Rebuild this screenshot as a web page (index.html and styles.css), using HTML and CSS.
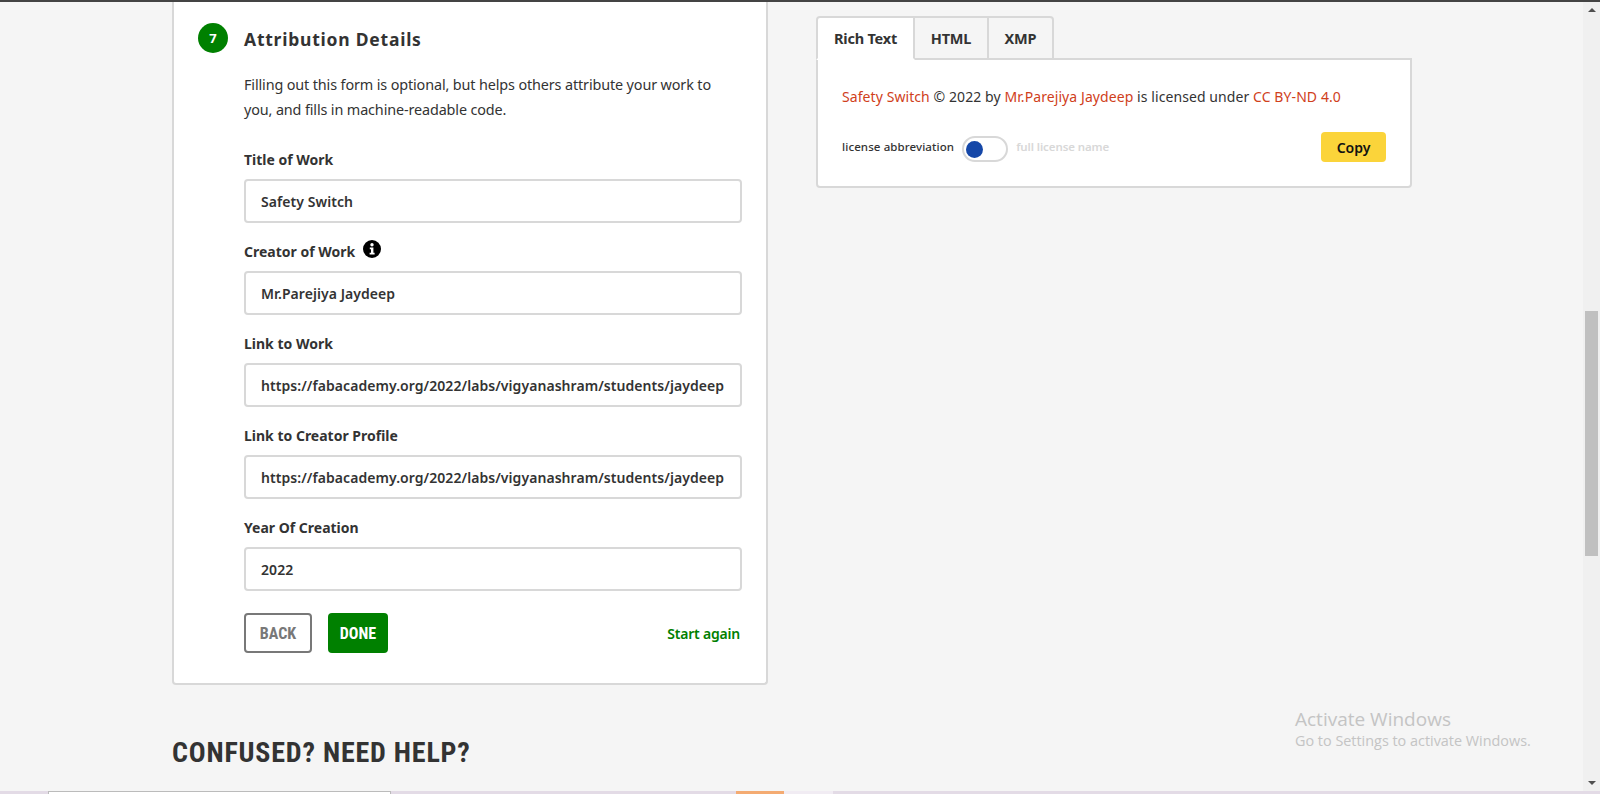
FILE: index.html
```html
<!DOCTYPE html>
<html lang="en">
<head>
<meta charset="utf-8">
<title>Attribution Details</title>
<link rel="stylesheet" href="styles.css">
</head>
<body>
<div class="page">
  <div class="topbar"></div>
  <div class="middle">
    <main class="content">
      <div class="columns">
        <section class="card">
          <div class="step-head">
            <span class="step-num">7</span>
            <h2 class="step-title">Attribution Details</h2>
          </div>
          <div class="step-body">
            <p class="intro">Filling out this form is optional, but helps others attribute your work to you, and fills in machine-readable code.</p>
            <div class="field">
              <label class="label">Title of Work</label>
              <div class="input">Safety Switch</div>
            </div>
            <div class="field">
              <label class="label">Creator of Work
                <svg class="info" viewBox="0 0 18 18" width="18" height="18"><circle cx="9" cy="9" r="9" fill="#000"/><circle cx="9" cy="4.8" r="1.7" fill="#fff"/><path d="M6.8 7.4h3.6v5.4h1.2v1.8H6.6v-1.8h1.4V9.2H6.8z" fill="#fff"/></svg>
              </label>
              <div class="input">Mr.Parejiya Jaydeep</div>
            </div>
            <div class="field">
              <label class="label">Link to Work</label>
              <div class="input">https://fabacademy.org/2022/labs/vigyanashram/students/jaydeep</div>
            </div>
            <div class="field">
              <label class="label">Link to Creator Profile</label>
              <div class="input">https://fabacademy.org/2022/labs/vigyanashram/students/jaydeep</div>
            </div>
            <div class="field">
              <label class="label">Year Of Creation</label>
              <div class="input">2022</div>
            </div>
            <div class="actions">
              <button class="btn btn-back">BACK</button>
              <button class="btn btn-done">DONE</button>
              <a class="restart">Start again</a>
            </div>
          </div>
        </section>
        <aside class="side">
          <div class="tabs">
            <span class="tab tab-active">Rich Text</span>
            <span class="tab">HTML</span>
            <span class="tab">XMP</span>
          </div>
          <div class="panel">
            <p class="attribution"><a class="link">Safety Switch</a> © 2022 by <a class="link">Mr.Parejiya Jaydeep</a> is licensed under <a class="link">CC BY-ND 4.0</a></p>
            <div class="panel-foot">
              <div class="switch-row">
                <span class="switch-on">license abbreviation</span>
                <span class="switch"><span class="knob"></span></span>
                <span class="switch-off">full license name</span>
              </div>
              <button class="copy">Copy</button>
            </div>
          </div>
        </aside>
      </div>
      <h2 class="help">CONFUSED? NEED HELP?</h2>
    </main>
    <div class="scrollbar">
      <span class="arrow-up"></span>
      <span class="thumb"></span>
      <span class="arrow-down"></span>
    </div>
    <div class="watermark">
      <div class="wm-title">Activate Windows</div>
      <div class="wm-sub">Go to Settings to activate Windows.</div>
    </div>
  </div>
  <div class="strip">
    <span class="strip-box"></span>
    <span class="strip-orange"></span>
    <span class="strip-light"></span>
  </div>
</div>
</body>
</html>
```

FILE: styles.css
```css
* { box-sizing: border-box; }
html, body { margin: 0; height: 100%; overflow: hidden; }
body { background: #f5f5f5; color: #333; font-family: "Noto Sans", sans-serif; }
.page { height: 794px; display: flex; flex-direction: column; }
.topbar { height: 2px; background: #444; flex: none; }
.middle { flex: 1; display: flex; position: relative; min-height: 0; }
.content { flex: 1; padding-left: 172px; overflow: hidden; }
.columns { display: flex; gap: 48px; align-items: flex-start; }

.card { width: 596px; background: #fff; border: 2px solid #d8d8d8; border-top: 0; border-radius: 0 0 4px 4px; padding: 21px 24px 30px; }
.step-head { display: flex; align-items: center; gap: 16px; height: 30px; }
.step-num { width: 30px; height: 30px; border-radius: 50%; background: #008000; color: #fff; font-weight: 700; font-size: 13px; display: flex; align-items: center; justify-content: center; }
.step-title { margin: 2px 0 0; font-size: 17.5px; font-weight: 700; letter-spacing: .77px; color: #333; }
.step-body { padding-left: 46px; }
.intro { max-width: 480px; margin: 19px 0 25px; font-size: 14.4px; line-height: 25px; letter-spacing: -.13px; color: #333; }
.field { margin-bottom: 16px; }
.label { display: flex; align-items: center; height: 24px; margin-bottom: 8px; font-size: 14px; font-weight: 700; letter-spacing: 0; color: #333; }
.info { margin-left: 8px; margin-top: -4px; }
.input { height: 44px; border: 2px solid #d8d8d8; border-radius: 4px; background: #fff; padding: 0 15px; display: flex; align-items: center; font-size: 14px; font-weight: 600; letter-spacing: .06px; white-space: nowrap; overflow: hidden; color: #333; }
.actions { display: flex; align-items: center; margin-top: 22px; }
.btn { height: 40px; border-radius: 4px; font-family: "Roboto Condensed", "Liberation Sans Narrow", Roboto, sans-serif; font-stretch: 75%; font-weight: 700; font-size: 16px; padding: 0; }
.btn-back { width: 68px; background: #fff; border: 2px solid #787878; color: #787878; }
.btn-done { width: 60px; margin-left: 16px; background: #008000; border: 0; color: #fff; }
.restart { margin-left: auto; margin-right: 2px; font-size: 14px; font-weight: 600; color: #008000; letter-spacing: -.2px; }

.side { width: 596px; padding-top: 14px; }
.tabs { display: flex; height: 44px; margin-bottom: -2px; position: relative; }
.tab { height: 44px; display: flex; align-items: center; justify-content: center; border: 2px solid #d8d8d8; border-left-width: 0; font-size: 14.5px; font-weight: 700; color: #333; letter-spacing: -.2px; width: 74px; }
.tab:last-child { width: 65px; border-radius: 0 4px 0 0; }
.tab-active { width: 99px; border-left-width: 2px; background: #fff; border-bottom-color: #fff; border-radius: 4px 0 0 0; }
.panel { height: 130px; background: #fff; border: 2px solid #d8d8d8; border-radius: 0 0 4px 4px; padding: 25px 24px 0; }
.attribution { margin: 0; font-size: 14px; line-height: 24px; letter-spacing: .08px; color: #333; }
.link { color: #d0401b; }
.panel-foot { display: flex; align-items: center; justify-content: space-between; margin-top: 23px; }
.switch-row { display: flex; align-items: center; gap: 8px; }
.switch-on { font-size: 11.5px; font-weight: 500; color: #333; letter-spacing: .1px; margin-top: -2px; }
.switch-off { font-size: 11.5px; font-weight: 600; color: #d8d8d8; margin-top: -2px; letter-spacing: -.1px; }
.switch { width: 46px; height: 26px; margin-top: 4px; border: 2px solid #d8d8d8; border-radius: 13px; background: #fff; display: flex; align-items: center; padding-left: 2px; }
.knob { width: 17px; height: 17px; border-radius: 50%; background: #1547a8; }
.copy { width: 65px; height: 30px; border: 0; border-radius: 4px; background: #fbd43a; color: #111; font-family: "Noto Sans", sans-serif; font-size: 14px; font-weight: 600; padding: 0; }

.help { margin: 50px 0 0; font-family: "Roboto Condensed", "Liberation Sans Narrow", Roboto, sans-serif; font-stretch: 75%; font-size: 28px; line-height: 36px; font-weight: 700; letter-spacing: .8px; color: #333; }

.scrollbar { width: 17px; flex: none; background: #f0f0f0; display: flex; flex-direction: column; align-items: center; position: relative; }
.arrow-up { width: 0; height: 0; border: 4px solid transparent; border-top: 0; border-bottom: 4px solid #505050; margin-top: 6px; }
.thumb { width: 13px; height: 245px; background: #c0c0c0; margin-top: 299px; }
.arrow-down { width: 0; height: 0; border: 4px solid transparent; border-bottom: 0; border-top: 4px solid #505050; margin-top: auto; margin-bottom: 6px; }

.watermark { position: absolute; left: 1295px; top: 705px; color: #c4c4c4; font-family: "Open Sans", sans-serif; pointer-events: none; }
.wm-title { font-size: 19px; line-height: 24px; }
.wm-sub { font-size: 14.4px; line-height: 20px; }

.strip { flex: none; height: 3px; background: #e3dbe6; display: flex; }
.strip-box { width: 343px; margin-left: 48px; background: #fff; border-top: 1px solid #bbb; border-left: 1px solid #bbb; border-right: 1px solid #bbb; }
.strip-orange { width: 48px; margin-left: 345px; background: #f4ab72; }
.strip-light { width: 49px; background: #f1ecf3; }
```
